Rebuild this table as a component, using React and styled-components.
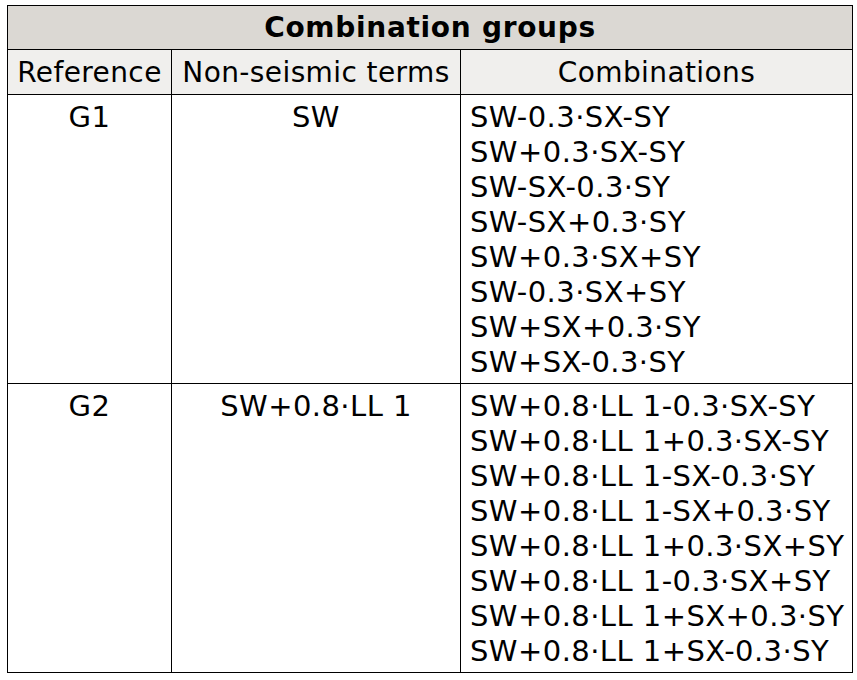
import React from "react";
import styled, { createGlobalStyle } from "styled-components";

const GlobalStyle = createGlobalStyle`
  body {
    margin: 0;
    background: #ffffff;
    font-family: "DejaVu Sans", Verdana, sans-serif;
    color: #000000;
  }
`;

const Table = styled.table`
  margin: 5px 0 0 7px;
  width: 845px;
  table-layout: fixed;
  border-collapse: collapse;
  border: 1px solid #000;
  font-size: 28px;
`;

const Col = styled.col`
  width: ${(p) => p.$w}px;
`;

const TitleCell = styled.th`
  height: 43px;
  padding: 0;
  background: #dbd8d3;
  font-weight: bold;
  font-size: 28px;
  letter-spacing: 0.7px;
  text-align: center;
  border: 1px solid #000;
`;

const HeadCell = styled.th`
  height: 44px;
  padding: 0;
  background: #f0efed;
  font-weight: normal;
  letter-spacing: 0.4px;
  text-align: center;
  border: 1px solid #000;
  white-space: nowrap;
`;

const Cell = styled.td`
  vertical-align: top;
  padding: 5px 0 3px ${(p) => (p.$left ? "9px" : "0")};
  font-size: 29px;
  letter-spacing: 0.45px;
  line-height: 35px;
  text-align: ${(p) => (p.$left ? "left" : "center")};
  border: 1px solid #000;
  white-space: nowrap;
`;

const Line = styled.div``;

const groups = [
  {
    ref: "G1",
    terms: "SW",
    combos: [
      "SW-0.3·SX-SY",
      "SW+0.3·SX-SY",
      "SW-SX-0.3·SY",
      "SW-SX+0.3·SY",
      "SW+0.3·SX+SY",
      "SW-0.3·SX+SY",
      "SW+SX+0.3·SY",
      "SW+SX-0.3·SY",
    ],
  },
  {
    ref: "G2",
    terms: "SW+0.8·LL 1",
    combos: [
      "SW+0.8·LL 1-0.3·SX-SY",
      "SW+0.8·LL 1+0.3·SX-SY",
      "SW+0.8·LL 1-SX-0.3·SY",
      "SW+0.8·LL 1-SX+0.3·SY",
      "SW+0.8·LL 1+0.3·SX+SY",
      "SW+0.8·LL 1-0.3·SX+SY",
      "SW+0.8·LL 1+SX+0.3·SY",
      "SW+0.8·LL 1+SX-0.3·SY",
    ],
  },
];

export default function App() {
  return (
    <>
      <GlobalStyle />
      <Table>
        <colgroup>
          <Col $w={164} />
          <Col $w={289} />
          <Col $w={392} />
        </colgroup>
        <thead>
          <tr>
            <TitleCell colSpan={3}>Combination groups</TitleCell>
          </tr>
          <tr>
            <HeadCell>Reference</HeadCell>
            <HeadCell>Non-seismic terms</HeadCell>
            <HeadCell>Combinations</HeadCell>
          </tr>
        </thead>
        <tbody>
          {groups.map((g) => (
            <tr key={g.ref}>
              <Cell>{g.ref}</Cell>
              <Cell>{g.terms}</Cell>
              <Cell $left>
                {g.combos.map((c) => (
                  <Line key={c}>{c}</Line>
                ))}
              </Cell>
            </tr>
          ))}
        </tbody>
      </Table>
    </>
  );
}
